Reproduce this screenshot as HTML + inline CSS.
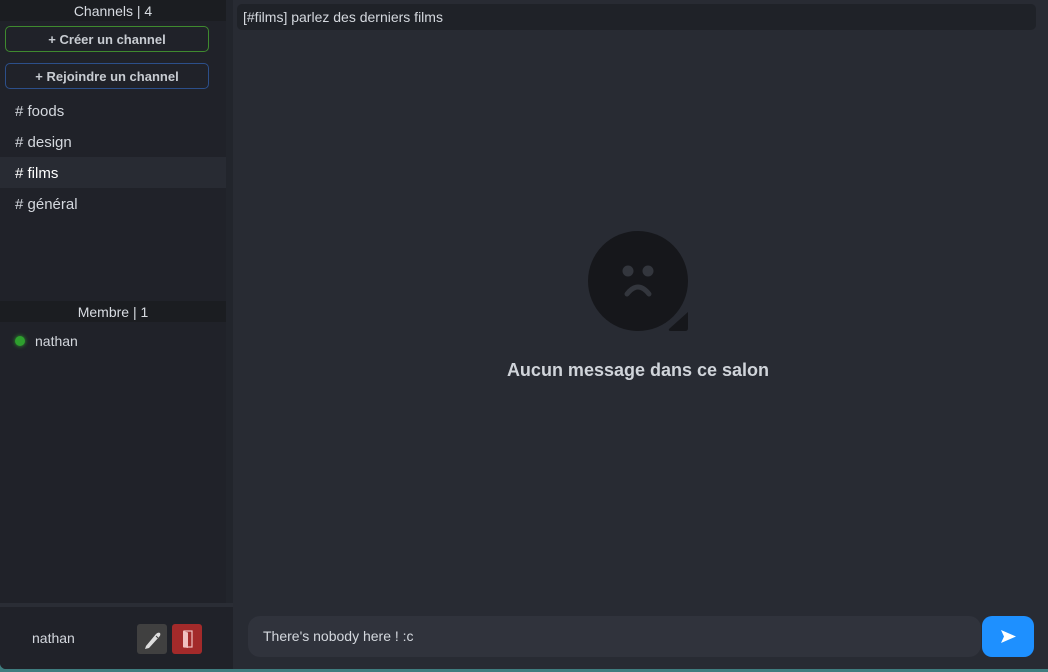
<!DOCTYPE html><html><head><style>
*{margin:0;padding:0;box-sizing:border-box}
body{width:1048px;height:672px;background:#3f7d7f;font-family:"Liberation Sans",sans-serif;position:relative;overflow:hidden}
.a{position:absolute}
.sb{left:0;top:0;width:233px;height:669px;background:#22252c;border-bottom-left-radius:6px;overflow:hidden}
.panel{left:0;top:0;width:226px;height:603px;background:#202229}
.hd{left:0;width:226px;height:21px;background:#1b1d21;color:#d8dce2;font-size:14px;text-align:center;line-height:21px}
.btn{left:5px;width:204px;height:26px;border-radius:5px;color:#c8ccd2;font-size:13px;font-weight:bold;text-align:center;line-height:25px}
.ch{left:15px;color:#d4d8de;font-size:15px}
.main{left:233px;top:0;width:815px;height:669px;background:#282b33}
</style></head><body>
<div class="a sb">
<div class="a panel"></div>
<div class="a hd" style="top:0;line-height:22px">Channels | 4</div>
<div class="a btn" style="top:26px;border:1px solid #3f8a2f">+ Créer un channel</div>
<div class="a btn" style="top:63px;border:1px solid #2c4f8a">+ Rejoindre un channel</div>
<div class="a ch" style="top:103px"># foods</div>
<div class="a ch" style="top:134px"># design</div>
<div class="a" style="left:0;top:157px;width:226px;height:31px;background:#282b33"></div>
<div class="a ch" style="top:165px;color:#fff"># films</div>
<div class="a ch" style="top:196px"># général</div>
<div class="a hd" style="top:301px;line-height:22px">Membre | 1</div>
<div class="a" style="left:15px;top:336px;width:10px;height:10px;border-radius:50%;background:#2ea02e;box-shadow:0 0 4px #2ea02e"></div>
<div class="a" style="left:35px;top:333px;color:#d4d8de;font-size:14px">nathan</div>
<div class="a" style="left:0;top:603px;width:233px;height:4px;background:#2a2d35"></div>
<div class="a" style="left:0;top:607px;width:233px;height:62px;background:#202229"></div>
<div class="a" style="left:32px;top:630px;color:#d4d8de;font-size:14px">nathan</div>
<div class="a" style="left:137px;top:624px;width:30px;height:30px;border-radius:3px;background:#404040">
<svg width="30" height="30" viewBox="0 0 30 30"><path d="M9 22 L19 10 Q21 8 23 9 Q24 11 22 13 L12 24 L8 25 Z" fill="#ddd"/><path d="M19 12 L21 14" stroke="#404040" stroke-width="1"/></svg></div>
<div class="a" style="left:172px;top:624px;width:30px;height:30px;border-radius:3px;background:#a32a2a">
<svg width="30" height="30" viewBox="0 0 30 30"><rect x="12" y="7" width="8" height="16" fill="none" stroke="#f0c0c0" stroke-width="1.2"/><path d="M11 7 L16 8.5 L16 24 L11 23Z" fill="#f0c0c0"/></svg></div>
</div>
<div class="a main">
<div class="a" style="left:4px;top:4px;width:799px;height:26px;background:#1f2228;border-radius:5px;color:#d4d8de;font-size:14px;line-height:27px;padding-left:6px">[#films] parlez des derniers films</div>
<svg class="a" style="left:355px;top:231px" width="100" height="100" viewBox="0 0 100 100"><circle cx="50" cy="50" r="50" fill="#16171b"/><path d="M81 98 L100 81 L100 97 Q100 100 97 100 L83 100 Q80 100 81 98Z" fill="#16171b"/><circle cx="40" cy="40" r="5.5" fill="#33363d"/><circle cx="60" cy="40" r="5.5" fill="#33363d"/><path d="M39 63 Q50 49 61 63" stroke="#33363d" stroke-width="5" fill="none" stroke-linecap="round"/></svg>
<div class="a" style="left:0;width:810px;top:360px;text-align:center;color:#d0d4da;font-size:18px;font-weight:bold">Aucun message dans ce salon</div>
<div class="a" style="left:15px;top:616px;width:733px;height:41px;background:#30333c;border-radius:12px;color:#d4d8de;font-size:14px;line-height:41px;padding-left:15px">There's nobody here ! :c</div>
<div class="a" style="left:749px;top:616px;width:52px;height:41px;background:#1e90ff;border-radius:10px"><svg width="52" height="41"><path d="M19 14 L34 20.5 L19 27 L22 20.5Z" fill="#fff"/></svg></div>
</div>
</body></html>
